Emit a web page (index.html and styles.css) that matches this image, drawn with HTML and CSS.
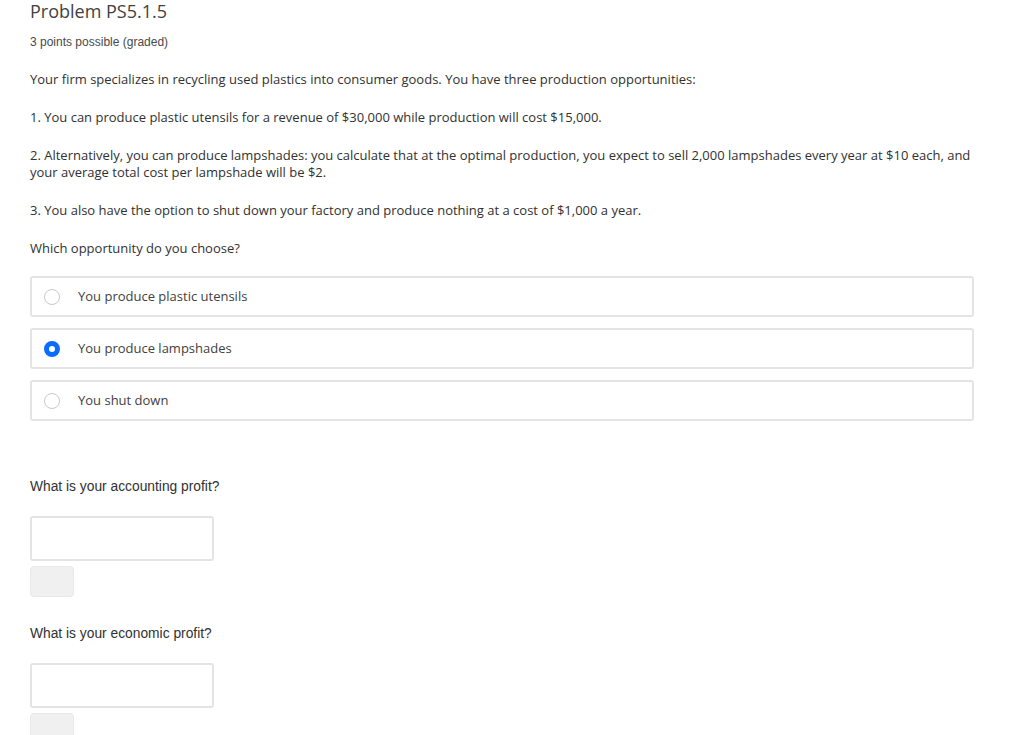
FILE: index.html
```html
<!DOCTYPE html>
<html>
<head>
<meta charset="utf-8">
<link rel="stylesheet" href="styles.css">
</head>
<body>
<div class="problem">
  <h2 class="title">Problem PS5.1.5</h2>
  <div class="points">3 points possible (graded)</div>
  <div class="body">
    <p>Your firm specializes in recycling used plastics into consumer goods. You have three production opportunities:</p>
    <p>1. You can produce plastic utensils for a revenue of $30,000 while production will cost $15,000.</p>
    <p>2. Alternatively, you can produce lampshades: you calculate that at the optimal production, you expect to sell 2,000 lampshades every year at $10 each, and your average total cost per lampshade will be $2.</p>
    <p>3. You also have the option to shut down your factory and produce nothing at a cost of $1,000 a year.</p>
    <p class="question">Which opportunity do you choose?</p>
    <div class="choices">
      <label class="choice"><span class="radio"></span><span class="choice-text">You produce plastic utensils</span></label>
      <label class="choice"><span class="radio checked"></span><span class="choice-text">You produce lampshades</span></label>
      <label class="choice"><span class="radio"></span><span class="choice-text">You shut down</span></label>
    </div>
    <div class="numeric">
      <div class="q-label">What is your accounting profit?</div>
      <div class="input-box"></div>
      <div class="status-btn"></div>
    </div>
    <div class="numeric">
      <div class="q-label">What is your economic profit?</div>
      <div class="input-box"></div>
      <div class="status-btn"></div>
    </div>
  </div>
</div>
</body>
</html>
```
FILE: styles.css
```css
html, body {
  margin: 0;
  padding: 0;
  background: #fff;
  overflow: hidden;
}
.problem {
  padding: 0 0 0 30px;
  width: 944px;
  font-family: "Open Sans", sans-serif;
  color: #313131;
}
.title {
  margin: 0;
  font-size: 18px;
  line-height: 22px;
  font-weight: 400;
  color: #414141;
}
.points {
  margin-top: 13px;
  font-family: "Liberation Sans", Arial, sans-serif;
  font-size: 12px;
  line-height: 15px;
  color: #4a4a4a;
}
.body {
  margin-top: 21px;
  font-size: 13px;
  line-height: 17px;
}
.body p {
  margin: 0 0 21px 0;
}
.body p.question {
  margin-bottom: 19px;
}
.choices {
  display: flex;
  flex-direction: column;
  gap: 11px;
}
.choice {
  display: flex;
  align-items: center;
  height: 37px;
  border: 2px solid #e4e4e4;
  border-radius: 3px;
  padding-left: 12px;
  color: #414141;
}
.radio {
  width: 14px;
  height: 14px;
  border: 1px solid #c8c8c8;
  border-radius: 50%;
  background: #fff;
  box-sizing: content-box;
  flex: none;
}
.radio.checked {
  width: 6px;
  height: 6px;
  border: 5px solid #0a6cff;
  background: #fff;
}
.choice-text {
  margin-left: 18px;
}
.numeric {
  margin-top: 58px;
}
.numeric + .numeric {
  margin-top: 29px;
}
.q-label {
  font-family: "Liberation Sans", Arial, sans-serif;
  font-size: 13.8px;
  line-height: 16px;
  color: #313131;
}
.input-box {
  margin-top: 21px;
  width: 180px;
  height: 41px;
  border: 2px solid #e4e4e4;
  border-radius: 3px;
  background: #fff;
}
.status-btn {
  margin-top: 5px;
  width: 42px;
  height: 29px;
  border: 1px solid #e8e8e8;
  border-radius: 4px;
  background: #f0f0f0;
}
```
